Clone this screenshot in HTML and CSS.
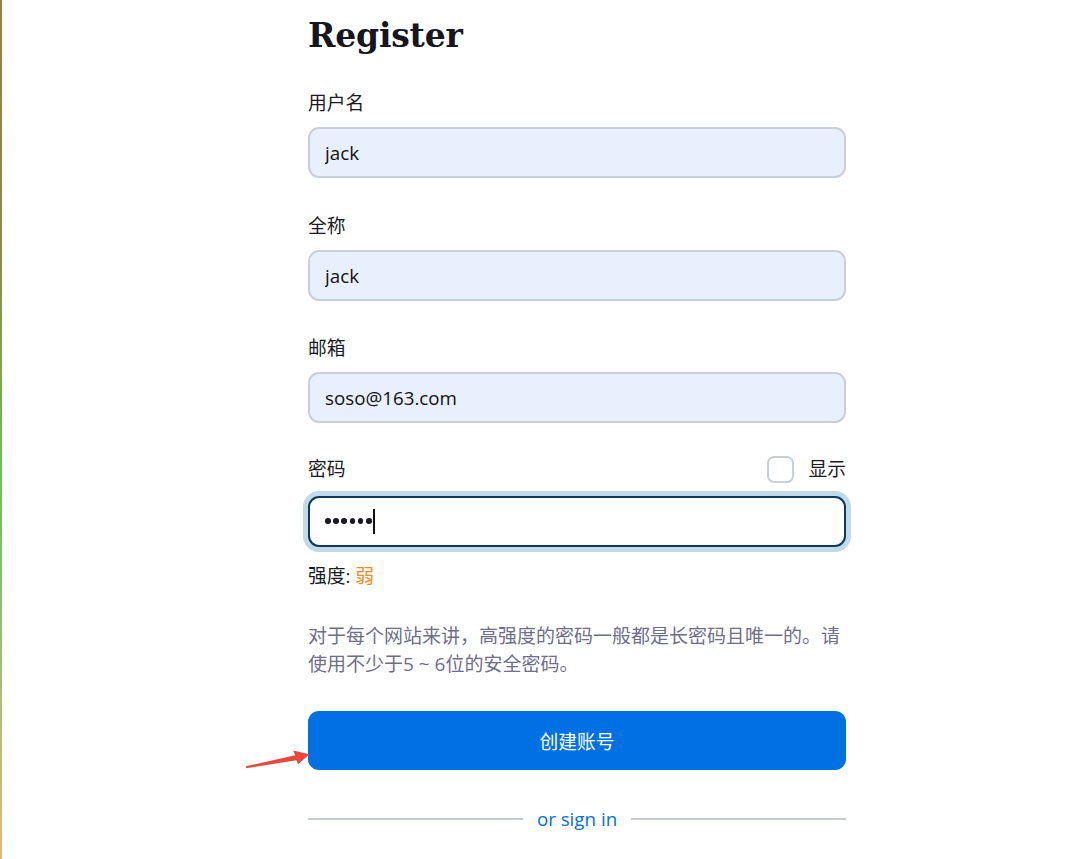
FILE: index.html
```html
<!DOCTYPE html>
<html lang="zh-CN">
<head>
<meta charset="utf-8">
<title>Register</title>
<link rel="stylesheet" href="styles.css">
</head>
<body>
<div class="page">
  <form class="register">
    <h1 class="title">Register</h1>

    <div class="field">
      <label class="label">用户名</label>
      <input class="input autofill" type="text" value="jack">
    </div>

    <div class="field">
      <label class="label">全称</label>
      <input class="input autofill" type="text" value="jack">
    </div>

    <div class="field">
      <label class="label">邮箱</label>
      <input class="input autofill" type="email" value="soso@163.com">
    </div>

    <div class="field field-password">
      <div class="label-row">
        <label class="label">密码</label>
        <label class="show">
          <span class="checkbox"></span>
          <span>显示</span>
        </label>
      </div>
      <div class="input focused">
        <span class="dots"><i></i><i></i><i></i><i></i><i></i><i></i></span><span class="caret"></span>
      </div>
      <div class="strength">强度: <span class="weak">弱</span></div>
    </div>

    <p class="help">对于每个网站来讲，高强度的密码一般都是长密码且唯一的。请使用不少于5 ~ 6位的安全密码。</p>

    <div class="button-wrap">
      <button class="submit" type="button">创建账号</button>
      <svg class="arrow" width="70" height="24" viewBox="240 745 70 24">
        <polygon points="244,768.3 294.5,760.2 296,764.2 307.5,754.3 291.2,750.5 293.2,755.3 244,766.3" fill="#e8493b"/>
      </svg>
    </div>

    <div class="divider">
      <span class="line"></span>
      <a class="signin">or sign in</a>
      <span class="line"></span>
    </div>
  </form>
</div>
</body>
</html>
```
FILE: styles.css
```css
* { box-sizing: border-box; }

html, body {
  margin: 0;
  padding: 0;
  background: #ffffff;
}

body {
  font-family: "Open Sans", "Noto Sans CJK SC", sans-serif;
  font-size: 18.75px;
  color: #1a1a24;
}

.page {
  min-height: 859px;
  border-left: 2px solid #8a8a4a;
  border-image: linear-gradient(to bottom, #9a7e48 0%, #8c8a4c 30%, #6fbe5c 55%, #8fbf78 72%, #e6b878 100%) 1;
}

.register {
  width: 538px;
  margin-left: 306px;
  padding-top: 18px;
}

.title {
  margin: 0;
  font-family: "DejaVu Serif", "Liberation Serif", serif;
  font-weight: bold;
  font-size: 33px;
  line-height: 36px;
  color: #16161f;
  letter-spacing: -0.2px;
}

.field {
  margin-top: 37px;
}

.field + .field {
  margin-top: 35.5px;
}

.label {
  display: block;
  font-size: 18.75px;
  line-height: 24px;
  color: #1a1a24;
}

.input {
  display: block;
  width: 100%;
  height: 51px;
  margin-top: 12px;
  padding: 0 15px;
  border: 2px solid #c7cfd7;
  border-radius: 11px;
  background: #ffffff;
  font-family: "Open Sans", "Noto Sans CJK SC", sans-serif;
  font-size: 18.75px;
  color: #111;
  outline: none;
}

.autofill {
  background: #e8f0fe;
}

.label-row {
  display: flex;
  align-items: center;
  justify-content: space-between;
  height: 27px;
  margin-top: -3px;
}

.show {
  display: flex;
  align-items: center;
  gap: 15px;
  font-size: 18.75px;
  line-height: 24px;
}

.checkbox {
  width: 27px;
  height: 27px;
  border: 2px solid #c7cfd7;
  border-radius: 7px;
  background: #fff;
}

.focused {
  position: relative;
  display: flex;
  align-items: center;
  margin-top: 13px;
  border-color: #0c3a5a;
  box-shadow: 0 0 0 5px #c2d9e8;
}

.dots {
  display: flex;
  gap: 2.6px;
}

.dots i {
  display: block;
  width: 5.6px;
  height: 5.6px;
  border-radius: 50%;
  background: #1a1a22;
}

.caret {
  display: inline-block;
  width: 2px;
  height: 25px;
  margin-left: 1px;
  background: #111;
}

.strength {
  margin-top: 17px;
  font-size: 18.75px;
  line-height: 24px;
}

.weak {
  color: #f08a1c;
}

.help {
  margin: 34px 0 0;
  font-size: 19px;
  line-height: 28px;
  color: #6f6e8a;
}

.button-wrap {
  position: relative;
  margin-top: 33px;
}

.submit {
  display: block;
  width: 100%;
  height: 59px;
  border: none;
  border-radius: 11px;
  background: #0070e2;
  color: #ffffff;
  font-family: "Open Sans", "Noto Sans CJK SC", sans-serif;
  font-size: 18.75px;
  cursor: pointer;
}

.arrow {
  position: absolute;
  left: -66px;
  top: 34px;
}

.divider {
  display: flex;
  align-items: center;
  gap: 14px;
  height: 24px;
  margin-top: 37px;
}

.line {
  flex: 1;
  height: 2px;
  background: #c7cbd0;
}

.signin {
  font-size: 18.75px;
  line-height: 24px;
  color: #0070e2;
  cursor: pointer;
}
```
